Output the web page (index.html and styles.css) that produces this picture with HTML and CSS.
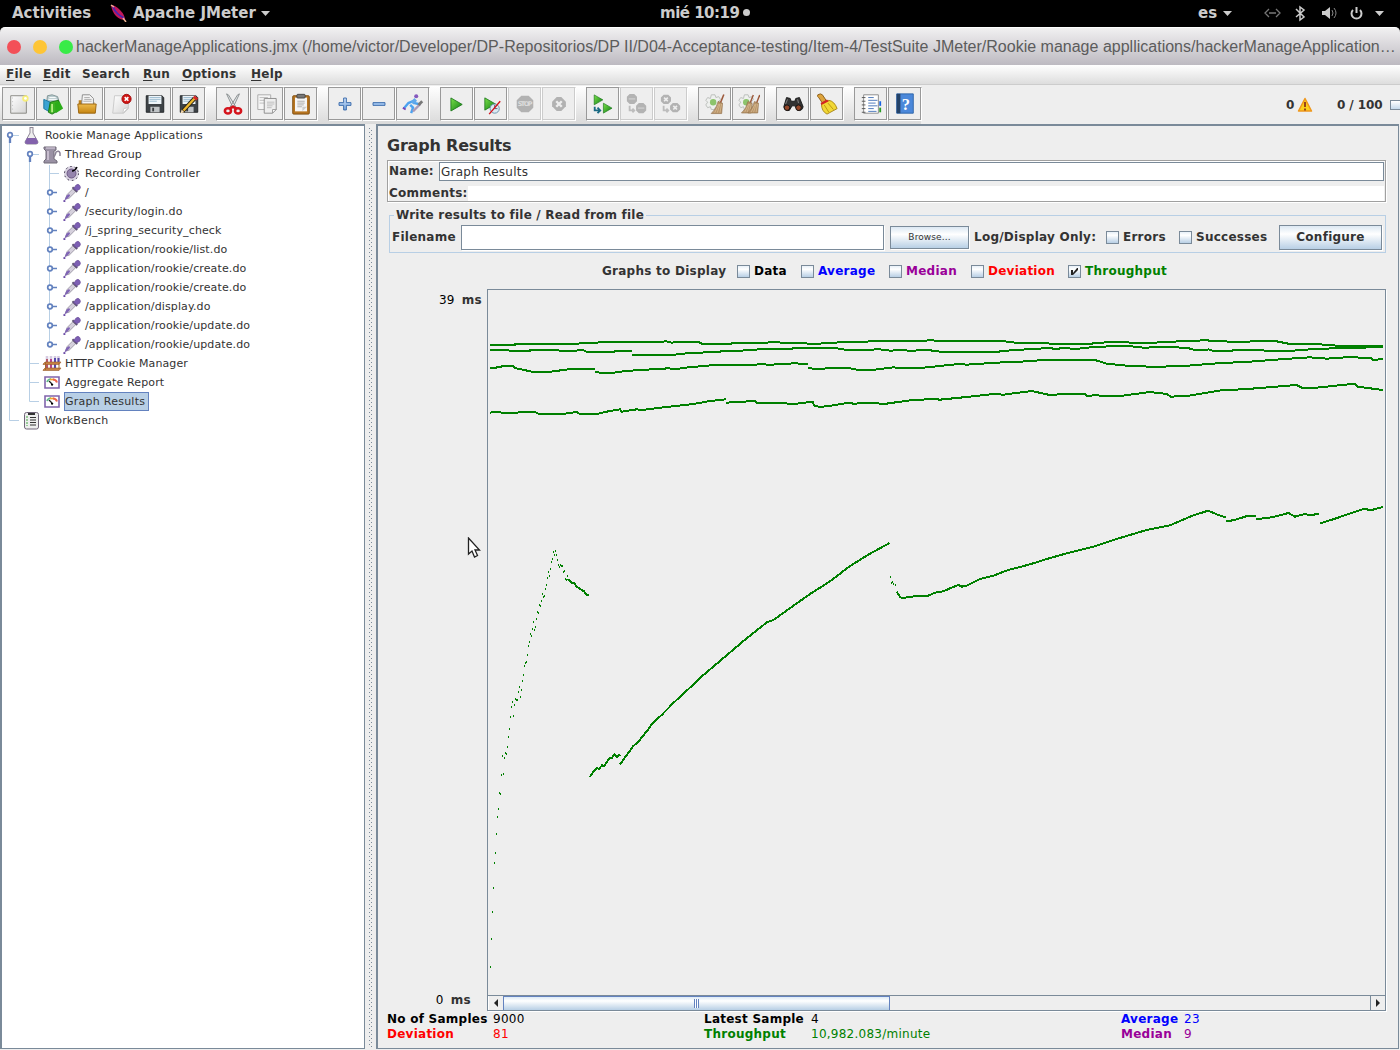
FILE: index.html
```html
<!DOCTYPE html>
<html lang="es">
<head>
<meta charset="utf-8">
<title>Apache JMeter</title>
<link rel="stylesheet" href="styles.css">
</head>
<body>
<svg class="defs" width="0" height="0">
  <defs>
    <linearGradient id="green" x2="1" y2="1"><stop stop-color="#7be04a"/><stop offset="1" stop-color="#0c7d12"/></linearGradient>
    <linearGradient id="paper" x2="1" y2="1"><stop stop-color="#fff"/><stop offset="1" stop-color="#d4d4d4"/></linearGradient>
    <linearGradient id="folderfill" x2="0" y2="1"><stop stop-color="#eebb4c"/><stop offset="1" stop-color="#c58411"/></linearGradient>
    <linearGradient id="bluefill" x2="0" y2="1"><stop stop-color="#cfe2fa"/><stop offset="1" stop-color="#74a3dc"/></linearGradient>
    <symbol id="dropper" viewBox="0 0 20 20"><path d="M3 17l2-5 6-6 3 3-7 7z" fill="#d5d0dc" stroke="#8d8896" stroke-width=".8"/><path d="M2 18.500l2-5 3-2 1 2-3 3z" fill="#8065b5"/><path d="M10.500 4.500l5 5" stroke="#5e5372" stroke-width="2"/><path d="M12 6l2-3.500q2.500-2 4 0t0 4L15 8z" fill="#7d5fb4" stroke="#70539f"/><path d="M1 18h2v2H1z" fill="#6c4ca6"/></symbol>
    <symbol id="gauge" viewBox="0 0 16 13"><path d="M1 1h14v11H1z" fill="#fff" stroke="#8064ac" stroke-width="1.600"/><path d="M3 6q1-3 4-3" fill="none" stroke="#60bc89" stroke-width="1.700"/><path d="M6 3.500h4" stroke="#f0a42d" stroke-width="1.700"/><path d="M9 3.500q3 0 4 3" fill="none" stroke="#ed644a" stroke-width="2"/><path d="M5 5l4 4" stroke="#222" stroke-width="1.200"/><path d="M7 8h2v1.500H7z"/></symbol>
    <symbol id="floppy" viewBox="0 0 22 22"><path d="M1.500 2h17l2 2v16h-19z" fill="#3d4246" stroke="#202326"/><path d="M4 2h14v9H4z" fill="#edf4f9"/><path d="M5 4h12M5 6h12M5 8h8" stroke="#99b9ce"/><path d="M6 14h10v6H6z" fill="#bfc3c6"/><path d="M8 15h2v4H8z" fill="#3b3f42"/></symbol>
    <symbol id="play" viewBox="0 0 16 18"><path d="M1 1.500l13 7.500L1 16.500z" fill="url(#green)" stroke="#1a771b"/></symbol>
    <symbol id="broom" viewBox="0 0 18 24"><path d="M16.500 1l-4 10" stroke="#9d5a3c" stroke-width="1.800"/><path d="M10 9l5 2-1 12H2q6-5 8-14z" fill="#b9956a" stroke="#94714b" stroke-width=".8"/><path d="M11 12L6 22M12 12L9 22m5-10l-2 10" stroke="#dcc096" stroke-width=".8"/></symbol>
    <symbol id="gear" viewBox="0 0 18 18"><path d="M7 1h4l1 3 3-1 2 3-2 2v3l2 2-3 3-3-1-1 2H7l-1-3-3 1-2-3 2-3-2-2 2-3 3 1z" fill="#eef0ee" stroke="#b9bdb9"/><circle cx="9" cy="9" r="3.500" fill="#8cc46c"/></symbol>
  </defs>
</svg>

<header class="topbar">
  <span class="activities">Activities</span>
  <svg class="feather" width="18" height="18" viewBox="0 0 18 18"><path d="M1 1q4 0 9 5t5 10q-5 0-9-4T1 1z" fill="#c2185b"/><path d="M3 3q3 7 11 11" fill="none" stroke="#4a25b0" stroke-width="1.800"/><path d="M1 1l3 2M13 14l3 4" stroke="#f0b495" stroke-width="1.500"/></svg>
  <span class="appname">Apache JMeter</span>
  <svg class="caret" width="9" height="5" viewBox="0 0 9 5"><path d="M0 0h9L4.500 5z" fill="#ccc"/></svg>
  <span class="clock">mié 10:19</span><i class="clockdot"></i>
  <span class="lang">es</span>
  <svg class="caret langcaret" width="9" height="5" viewBox="0 0 9 5"><path d="M0 0h9L4.500 5z" fill="#ccc"/></svg>
  <svg class="tray" width="122" height="18" viewBox="0 0 122 18"><g fill="none" stroke="#ccc"><path d="M5 5L1 9l4 4M12 5l4 4-4 4M5 9h7" stroke="#777" stroke-width="1.300"/><path d="M32 5l8 8-4 3V3l4 3-8 7" stroke-width="1.500"/><path d="M68 6q2 3 0 6M70 4q4 5 0 10" stroke="#888"/><path d="M89 6a5 5 0 1 0 7 0M92.500 3v6" stroke-width="2"/></g><path d="M58 7h3l5-4v12l-5-4h-3zM111 7h9l-4.500 5z" fill="#ccc"/></svg>
</header>

<div class="titlewrap"><div class="titlebar">
  <i class="light red"></i><i class="light yellow"></i><i class="light lime"></i>
  <span class="wintitle">hackerManageApplications.jmx (/home/victor/Developer/DP-Repositorios/DP II/D04-Acceptance-testing/Item-4/TestSuite JMeter/Rookie manage appllications/hackerManageApplication…</span>
</div></div>

<nav class="menubar">
  <span class="m-file"><u>F</u>ile</span><span class="m-edit"><u>E</u>dit</span><span class="m-search">Search</span><span class="m-run"><u>R</u>un</span><span class="m-options"><u>O</u>ptions</span><span class="m-help"><u>H</u>elp</span>
</nav>

<div class="toolbar">
  <div class="tools">
    <div class="group">
      <button><svg width="24" height="24" viewBox="0 0 24 24"><path d="M3 3h17v19H3z" fill="url(#paper)" stroke="#85857f"/><path d="M5 5v15" stroke="#bbb" stroke-dasharray="1 3"/><circle cx="19" cy="6" r="3.500" fill="#f6ee7b"/><circle cx="19" cy="6" r="1.500" fill="#fff"/></svg></button>
      <button><svg width="24" height="24" viewBox="0 0 24 24"><path d="M6 3l5-1 6 2 2 7H5z" fill="#b9cccf" stroke="#7e9293"/><path d="M8 5h7M7 7h9" stroke="#fff"/><path d="M2 7l7 3v11l-7-4z" fill="#3aa3d3" stroke="#17739e"/><path d="M9 10l9-2v11l-7 4-4-2z" fill="#3db223" stroke="#16750f"/><path d="M14 11l5-2 4 8-8 5z" fill="#2bad19"/><path d="M11 12v9" stroke="#b4ee83" stroke-width="2"/></svg></button>
      <button><svg width="24" height="24" viewBox="0 0 24 24"><path d="M3 11V8h4l1 2h12v11H3z" fill="#bd801e"/><path d="M7 2h8l4 4v8H6z" fill="#f4f4f4" stroke="#888"/><path d="M9 5h6M9 7h8M8 9h9" stroke="#aaa"/><path d="M2 12h20l-1 10H3z" fill="url(#folderfill)" stroke="#99620d"/></svg></button>
      <button><svg width="24" height="24" viewBox="0 0 24 24"><path d="M5 3h15v14l-5 5H3z" fill="url(#paper)" stroke="#c8c8c8"/><path d="M20 16l-5 1-1 5z" fill="#fff" stroke="#ccc"/><circle cx="18" cy="6.500" r="5" fill="#cf1715" stroke="#a20b0c"/><path d="M16 4.500l4 4m0-4l-4 4" stroke="#fff" stroke-width="1.800"/></svg></button>
      <button><svg width="24" height="24"><use href="#floppy" x="1" y="1" width="22" height="22"/></svg></button>
      <button><svg width="24" height="24"><use href="#floppy" x="1" y="1" width="22" height="22"/><path d="M5 20L18 6" stroke="#292316" stroke-width="4.500"/><path d="M6 19L18 6" stroke="#edb62d" stroke-width="2.600"/><path d="M17 4l4 3" stroke="#d52928" stroke-width="3"/><path d="M3 22l1-4 3 3z" fill="#f9ddb4"/></svg></button>
    </div>
    <div class="group">
      <button><svg width="24" height="24" viewBox="0 0 24 24"><path d="M5 1l2 1 8 13-3 1zM19 1l-2 1-8 13 3 1z" fill="#e5e8ea" stroke="#858a8c"/><g fill="none" stroke="#d5141c" stroke-width="2.800"><ellipse cx="6.500" cy="19.500" rx="3.300" ry="2.800"/><ellipse cx="17.500" cy="19.500" rx="3.300" ry="2.800"/><path d="M8 17l4-2 4 2"/></g></svg></button>
      <button><svg width="24" height="24" viewBox="0 0 24 24"><path d="M2 2h14v16H2z" fill="#f5f5f5" stroke="#aaa"/><path d="M4 5h9M4 8h8M4 11h6" stroke="#bbb"/><path d="M9 6h13v12l-4 4H9z" fill="#eee" stroke="#8a8a8a"/><path d="M12 10h8M12 12h8M12 14h6M12 16h5" stroke="#bbb"/><path d="M22 18h-4v4z" fill="#fff" stroke="#999"/></svg></button>
      <button><svg width="24" height="24" viewBox="0 0 24 24"><rect x="3" y="3" width="18" height="20" rx="1" fill="#b77521" stroke="#7c4a0c"/><path d="M5.500 5h13v15h-13z" fill="#f5f5f5"/><rect x="7.500" y="1.500" width="9" height="4" rx="1" fill="#777" stroke="#444"/><path d="M8 9h8M8 11h8M8 13h7M8 15h5" stroke="#aaa"/><path d="M18.500 15h-5v5z" fill="#ccc"/></svg></button>
    </div>
    <div class="group">
      <button><svg width="24" height="24" viewBox="0 0 24 24"><path d="M10.500 5.500h3v5h5v3h-5v5h-3v-5h-5v-3h5z" fill="url(#bluefill)" stroke="#3869aa"/></svg></button>
      <button><svg width="24" height="24" viewBox="0 0 24 24"><path d="M5.500 10.500h13v3h-13z" fill="#9ec2ee" stroke="#3869aa"/></svg></button>
      <button><svg width="24" height="24" viewBox="0 0 24 24"><path d="M2 17l5-6 5-2 2 2 4 1M9 13l3 3-2 6" fill="none" stroke="#4ba2f0" stroke-width="2.600"/><path d="M11 11l4-4" stroke="#60a9eb" stroke-width="4"/><circle cx="15.500" cy="3.500" r="2.200" fill="#8559bd"/><path d="M12 20l8-8" stroke="#a99ab7" stroke-width="2.500"/><path d="M18 13l4-4" stroke="#777" stroke-width="3"/><path d="M1 16l3 2" stroke="#7542b7" stroke-width="2"/></svg></button>
    </div>
    <div class="group">
      <button><svg width="24" height="24"><use href="#play" x="4" y="4" width="16" height="17"/></svg></button>
      <button><svg width="24" height="24"><use href="#play" x="4" y="4" width="15" height="16"/><circle cx="16" cy="17" r="5" fill="#dbe9f2" stroke="#668faa"/><path d="M16 13v4h3" fill="none" stroke="#557"/><path d="M10 23L22 9" stroke="#d41019" stroke-width="1.500"/></svg></button>
      <button class="off"><svg width="24" height="24" viewBox="0 0 24 24"><path d="M8 3h8l5 5v8l-5 5H8l-5-5V8z" fill="#b2b2b2"/><text x="4" y="14.500" class="stoptext" textLength="16">STOP</text></svg></button>
      <button class="off"><svg width="24" height="24" viewBox="0 0 24 24"><path d="M9.500 4.500h5l5 5v5l-5 5h-5l-5-5v-5z" fill="#b2b2b2"/><path d="M9 9l6 6m0-6l-6 6" stroke="#eee" stroke-width="2.600"/></svg></button>
    </div>
    <div class="group">
      <button><svg width="24" height="24"><use href="#play" x="1" y="1" width="13" height="13"/><use href="#play" x="11" y="10" width="13" height="13"/><path d="M3 15v4h5M6 16l3 3-3 3" fill="none" stroke="#196a83" stroke-width="2"/></svg></button>
      <button class="off"><svg width="24" height="24" viewBox="0 0 24 24"><path d="M4 1h5l3 3v5l-3 3H4L1 9V4zM14 11h5l3 3v5l-3 3h-5l-3-3v-5z" fill="#b3b3b3"/><path d="M3 6.500h7M13 16.500h7" stroke="#c8c8c8" stroke-width="2"/><path d="M4 14v5h4M7 17l2 2-2 2" fill="none" stroke="#bdbdbd" stroke-width="2"/></svg></button>
      <button class="off"><svg width="24" height="24" viewBox="0 0 24 24"><path d="M4 2h5l3 3v4l-3 3H4L1 9V5zM14 11h5l3 3v4l-3 3h-5l-3-3v-4z" fill="#b3b3b3"/><path d="M4.500 5l4 4m0-4l-4 4M14.500 14l4 4m0-4l-4 4" stroke="#eee" stroke-width="1.800"/><path d="M4 14v5h4M7 17l2 2-2 2" fill="none" stroke="#bdbdbd" stroke-width="2"/></svg></button>
    </div>
    <div class="group">
      <button><svg width="24" height="24"><use href="#gear" x="1" y="1" width="18" height="18"/><use href="#broom" x="6" y="0" width="17" height="24"/></svg></button>
      <button><svg width="24" height="24"><use href="#gear" x="0" y="1" width="18" height="18"/><use href="#broom" x="2" y="0" width="16" height="24"/><use href="#broom" x="9" y="0" width="16" height="24"/></svg></button>
    </div>
    <div class="group">
      <button><svg width="24" height="24" viewBox="0 0 24 24"><path d="M5 5l4 1 1 3h4l1-3 4-1 4 10q-1 5-6 4l-3-5h-3l-3 5q-5 1-6-4z" fill="#333" stroke="#171717"/><circle cx="5.500" cy="16" r="3" fill="#934729" stroke="#111"/><circle cx="18" cy="16" r="3" fill="#934729" stroke="#111"/><path d="M6 7l-2 5M17 7l1 4" stroke="#888"/></svg></button>
      <button><svg width="24" height="24" viewBox="0 0 24 24"><path d="M2 2q3-2 5 0l4 6-4 3-4-6q-2-1-1-3z" fill="#dda33c" stroke="#885a16"/><path d="M6 12l8-4q6 1 9 9l-11 6q-6-3-6-11z" fill="#f1d835" stroke="#a88412"/><path d="M5 11l7-4 2 2-8 4z" fill="#d32721"/><path d="M9 13l5 8M13 11l6 7" stroke="#b9930e"/></svg></button>
    </div>
    <div class="group">
      <button><svg width="24" height="24" viewBox="0 0 24 24"><path d="M4 2h16v20H4z" fill="#fff" stroke="#888"/><path d="M2 5h4M2 9h4M2 13h4M2 17h4M2 21h4" stroke="#555"/><path d="M9 5h6M9 8h10M9 11h8M9 14h10M9 17h6M9 20h9" stroke="#4572b8"/><path d="M22 9v5" stroke="#1a63e3" stroke-width="2"/><path d="M22 16v5" stroke="#299c24" stroke-width="2"/></svg></button>
      <button><svg width="24" height="24" viewBox="0 0 24 24"><path d="M3 1h18v21H3z" fill="#4b88da" stroke="#2b62a8"/><path d="M3 1h4v21H3z" fill="#234268"/><text x="8.500" y="18" class="helptext">?</text></svg></button>
    </div>
  </div>
  <span class="count">0</span>
  <svg class="warn" width="16" height="16" viewBox="0 0 16 16"><path d="M8 1.500l6.500 12.500h-13z" fill="#fbd01b" stroke="#ef971d" stroke-width="1.500" stroke-linejoin="round"/><path d="M8 5v5M8 11.500v2" stroke="#99441a" stroke-width="2"/></svg>
  <span class="ratio">0 / 100</span><i class="indicator"></i>
</div>

<main class="workspace">
  <aside class="tree">
    <svg class="branches" width="80" height="310" viewBox="0 0 80 310"><g fill="none" stroke="#b8cfe5"><path d="M7.500 15v279.500H17M10 9.500h7M27.500 34v241.500H37M30 28.500h7M27.500 237.500H37M27.500 256.500H37M47.500 39v179M47.500 47.500H57"/></g>
      <g fill="#fff" stroke="#6382bf" stroke-width="1.700"><path d="M8 11v6M28 30v6" stroke-width="2.300"/><circle cx="8" cy="9" r="2.300"/><circle cx="28" cy="28" r="2.300"/><path d="M50 66.500h5M50 85.500h5M50 104.500h5M50 123.500h5M50 142.500h5M50 161.500h5M50 180.500h5M50 199.500h5M50 218.500h5"/><circle cx="48" cy="66.500" r="2.300"/><circle cx="48" cy="85.500" r="2.300"/><circle cx="48" cy="104.500" r="2.300"/><circle cx="48" cy="123.500" r="2.300"/><circle cx="48" cy="142.500" r="2.300"/><circle cx="48" cy="161.500" r="2.300"/><circle cx="48" cy="180.500" r="2.300"/><circle cx="48" cy="199.500" r="2.300"/><circle cx="48" cy="218.500" r="2.300"/></g></svg>
    <ul class="nodes">
      <li class="l0"><svg width="20" height="19" viewBox="0 0 20 19"><path d="M7.500 1.500h4M8 2v5l-5 9q0 2 2 2h9q2 0 2-2l-5-9V2" fill="#eee" stroke="#8c8594"/><path d="M5 12h9l2 4q0 2-2 2H5q-2 0-2-2z" fill="#8362ac"/></svg><span>Rookie Manage Applications</span></li>
      <li class="l1"><svg width="20" height="19" viewBox="0 0 20 19"><path d="M2 2h12v3l-2 1v8l3 2v2H2v-2l2-2V6L2 4z" fill="#9a91a4" stroke="#716b78"/><path d="M4 3h9" stroke="#ded5e5"/><path d="M6 6v9" stroke="#c7bdce" stroke-width="2"/><path d="M12 12q2-4 2-5 3-2 4 1v3" fill="none" stroke="#8c8396" stroke-width="1.500"/></svg><span>Thread Group</span></li>
      <li class="l2"><svg width="20" height="19" viewBox="0 0 20 19"><circle cx="9.500" cy="9.500" r="7.500" fill="#d9d3e1"/><circle cx="9.500" cy="9.500" r="7" fill="none" stroke="#332b42" stroke-dasharray="1.500 3"/><circle cx="9.500" cy="9.500" r="4.500" fill="#9584ad" stroke="#6d5985"/><path d="M10 7q3 0 5-4" fill="none" stroke="#000" stroke-width="1.500"/></svg><span>Recording Controller</span></li>
      <li class="l2"><svg width="20" height="19"><use href="#dropper"/></svg><span>/</span></li>
      <li class="l2"><svg width="20" height="19"><use href="#dropper"/></svg><span>/security/login.do</span></li>
      <li class="l2"><svg width="20" height="19"><use href="#dropper"/></svg><span>/j_spring_security_check</span></li>
      <li class="l2"><svg width="20" height="19"><use href="#dropper"/></svg><span>/application/rookie/list.do</span></li>
      <li class="l2"><svg width="20" height="19"><use href="#dropper"/></svg><span>/application/rookie/create.do</span></li>
      <li class="l2"><svg width="20" height="19"><use href="#dropper"/></svg><span>/application/rookie/create.do</span></li>
      <li class="l2"><svg width="20" height="19"><use href="#dropper"/></svg><span>/application/display.do</span></li>
      <li class="l2"><svg width="20" height="19"><use href="#dropper"/></svg><span>/application/rookie/update.do</span></li>
      <li class="l2"><svg width="20" height="19"><use href="#dropper"/></svg><span>/application/rookie/update.do</span></li>
      <li class="l1"><svg width="20" height="19" viewBox="0 0 20 19"><path d="M5 2v12M9 2v12M13 2v12M16.500 2v6" stroke="#d5cbe1" stroke-width="2.600"/><path d="M5 5v9" stroke="#b45668" stroke-width="2"/><path d="M9 5v9" stroke="#b5428d" stroke-width="2"/><path d="M13 4v10M16.500 4v4" stroke="#5648ac" stroke-width="2"/><path d="M1 10l2-2h16l-2 2.500H1zM1 16l2-2h16l-2 2.500H1z" fill="#c78144" stroke="#995c2a" stroke-width=".6"/><path d="M3.500 8v8M17 9v6" stroke="#a5642c"/></svg><span>HTTP Cookie Manager</span></li>
      <li class="l1"><svg width="20" height="19"><use href="#gauge" x="2" y="3" width="16" height="13"/></svg><span>Aggregate Report</span></li>
      <li class="l1"><svg width="20" height="19"><use href="#gauge" x="2" y="3" width="16" height="13"/></svg><span class="selected">Graph Results</span></li>
      <li class="l0"><svg width="20" height="19" viewBox="0 0 20 19"><rect x="2.500" y="1.500" width="14" height="16.500" rx="2" fill="#eee" stroke="#71667a"/><path d="M6 3h7" stroke="#333" stroke-width="2"/><path d="M5 5v10" stroke="#43aa43" stroke-dasharray="2 1"/><path d="M8 6.500h6M8 9h6M8 11.500h6M8 14h6" stroke="#333"/></svg><span>WorkBench</span></li>
    </ul>
  </aside>
  <div class="divider"></div>
  <section class="panel">
    <h1>Graph Results</h1>
    <div class="namebox">
      <div class="namerow"><label>Name:</label><div class="field">Graph Results</div></div>
      <div class="commentrow"><label>Comments:</label><div class="comment"></div></div>
    </div>
    <fieldset>
      <legend>Write results to file / Read from file</legend>
      <div class="filerow"><label class="fn">Filename</label><div class="filefield"></div><button class="browse">Browse...</button><span class="logonly">Log/Display Only:</span><i class="check"></i><span class="errors">Errors</span><i class="check"></i><span class="successes">Successes</span><button class="configure">Configure</button></div>
    </fieldset>
    <div class="choices"><span class="c-lead">Graphs to Display</span><i class="check"></i><span class="c-data">Data</span><i class="check"></i><span class="c-avg blue">Average</span><i class="check"></i><span class="c-med purple">Median</span><i class="check"></i><span class="c-dev redtext">Deviation</span><i class="check"><svg width="11" height="11" viewBox="0 0 11 11"><path d="M2 4h2v3l4-5h1v2L4 9H2z" fill="#222"/></svg></i><span class="c-thr green">Throughput</span></div>
    <div class="graph">
      <div class="axis"><span class="ymax">39&nbsp; <b>ms</b></span><span class="ymin">0&nbsp; <b>ms</b></span></div>
      <div class="plotbox">
        <svg class="plot" width="896" height="705" viewBox="488 290 896 705" shape-rendering="crispEdges">
          <g transform="translate(480 330) scale(.33333333)" fill="none" stroke="#008000" stroke-width="6">
            <path d="M30 45H105V42H270L365 37 548 36 555 33 575 38 590 36H655L668 42H750L760 39 850 38 880 37 960 39 1000 42 1080 37 1180 34 1330 33 1350 30 1375 33 1575 34 1615 39 1735 41H1835L1845 39 1900 36 1960 38 2010 39 2070 35 2150 33 2170 30 2190 32 2250 35 2280 37 2315 34H2390L2425 41 2520 43 2570 47 2680 48 2709 48"/>
            <path d="M30 60H85L90 63H150V60H235L240 63 285 62 310 60 320 66H400L405 64 455 63M457 75H575L620 70 680 67 730 64 800 61 850 57H930L945 54H1065L1100 60H1175L1190 57 1230 62 1275 60 1290 64 1320 60 1365 62 1380 65 1470 66H1545L1600 60 1645 58 1690 55 1715 53 1720 57 1745 55 1795 56 1840 51 1890 49 1945 48 2000 54 2015 51H2090L2105 54 2120 53 2140 59 2175 61 2185 58 2200 63 2255 62 2265 60 2320 61 2440 63 2450 60 2540 56 2580 53H2655L2680 50H2709"/>
            <path d="M30 115H48L50 111 80 108 100 109 105 114 160 126H205L265 118 345 117M345 125L365 129H395L430 124 465 121 565 115 590 117 625 112 705 105H815L850 102 865 105 900 102 945 100 983 102M985 115L1030 117 1040 114 1110 115 1135 120 1185 119 1215 115 1240 112 1260 114 1330 113 1370 109 1435 102 1460 104 1550 98 1640 94 1690 90H1845L1880 101 1940 107 1990 109 2020 111 2125 107 2210 100 2310 95 2400 88 2490 82 2540 86 2610 81 2675 85 2680 90 2709 87"/>
            <path d="M30 248L50 245 70 249 110 248 130 245 165 246 175 251H255L290 246 300 252H350L385 244 420 238 425 245 470 238 485 240 560 231 640 222 690 213 738 208M738 218L825 213 830 219 950 221 998 215 1002 226 1020 231 1060 226 1105 218 1120 221 1190 218 1205 223 1290 211 1360 207 1380 209 1450 202 1540 192 1570 194 1655 183 1705 194 1815 192 1820 198 1850 195 1865 198H1920L2010 186 2060 192 2072 200 2120 198 2230 180 2290 178 2450 165 2465 173 2500 174 2625 161 2632 170 2709 180"/>
            <path d="M264 747L273 757 283 760 290 770 300 777 312 784 322 796H328M330 1341L338 1328 350 1314 357 1317 366 1306 373 1308 388 1285 395 1284 403 1274 410 1281 420 1274M420 1303L460 1248 475 1235 500 1204 520 1177 545 1155 580 1119 645 1059 655 1048 741 975 801 924 862 876 880 870 990 792 1050 754 1110 708 1170 671 1229 639M1250 785L1260 800 1266 805 1285 801 1320 797H1345L1365 788 1390 784 1410 775 1435 765 1445 770 1460 767 1500 747 1540 737 1585 720 1650 703 1700 687 1760 670 1840 650 1900 630 1950 615 2000 600 2070 586 2140 556 2185 542 2215 555 2237 562M2239 573L2260 571 2305 557 2327 557M2329 568L2380 561 2425 549 2445 560 2475 552 2490 556 2517 551M2519 581L2565 566 2650 537 2675 540 2709 531"/>
          </g>
          <g transform="translate(480 530) scale(.33333333)" stroke="#008000" stroke-width="3" fill="none"><path d="M31 1308v6M34 1224v6M37 1143v6M40 1071v6M43 996v6M46 966v6M49 909v6M52 858v6M55 834v6M58 786v6M61 789v6M64 732v6M67 675v6M70 729v6M73 681v6M76 666v6M79 669v6M82 648v6M85 618v6M88 594v6M91 558v6M94 528v6M97 513v6M100 555v6M103 522v6M106 504v6M109 507v6M112 507v6M115 483v6M118 468v6M121 498v6M124 477v6M127 450v6M130 432v6M133 405v6M136 396v6M139 393v6M142 372v6M145 345v6M148 333v6M151 309v6M154 315v6M157 294v6M160 273v6M163 297v6M166 288v6M169 264v6M172 243v6M175 246v6M178 222v6M181 225v6M184 210v6M187 189v6M190 198v6M193 195v6M196 174v6M199 162v6M202 141v6M205 123v6M208 135v6M211 114v6M214 93v6M217 84v6M220 63v6M223 72v6M226 60v6M229 72v6M232 87v6M235 102v6M238 108v6M241 102v6M244 105v6M247 105v6M250 123v6M253 120v6M256 144v6M259 147v6M262 135v6M1231 138v6M1234 156v6M1237 153v6M1240 159v6M1246 162v6"/></g>
        </svg>
        <div class="scrollbar"><button><svg width="6" height="8" viewBox="0 0 6 8"><path d="M5 0v8L1 4z" fill="#222"/></svg></button><div class="thumb"><i></i></div><button class="right"><svg width="6" height="8" viewBox="0 0 6 8"><path d="M1 0v8l4-4z" fill="#222"/></svg></button></div>
      </div>
    </div>
    <div class="stats"><b>No of Samples</b><span>9000</span><b>Latest Sample</b><span>4</span><b class="blue">Average</b><span class="blue">23</span><b class="redtext">Deviation</b><span class="redtext">81</span><b class="green">Throughput</b><span class="green">10,982.083/minute</span><b class="purple">Median</b><span class="purple">9</span></div>
  </section>
</main>
<svg class="pointer" width="14" height="22" viewBox="0 0 14 22"><path d="M1.500 1v16l3.500-3 2.500 6 3-1.500-2.500-5.500h4.500z" fill="#fff" stroke="#222" stroke-width="1.300"/></svg>
</body>
</html>
```
FILE: styles.css
```css
* { box-sizing: border-box; }
body { margin: 0; width: 1400px; height: 1050px; overflow: hidden; background: #eee; color: #333; font: 12px/15px "DejaVu Sans", sans-serif; letter-spacing: .25px; display: flex; flex-direction: column; }
button { padding: 0; margin: 0; font: inherit; color: inherit; letter-spacing: inherit; }
svg { display: block; flex: none; }
.defs { position: absolute; }
b, label { font-weight: bold; }
.topbar { height: 27px; background: #000; color: #ccc; display: flex; align-items: center; font: bold 15px/20px "DejaVu Sans", sans-serif; letter-spacing: 0; white-space: nowrap; padding: 0 0 2px 12px; flex: none; }
.activities { width: 98px; }
.feather { width: 18px; margin-right: 5px; }
.appname { width: 128px; }
.caret { margin-top: 2px; }
.clock { width: 81px; margin-left: 390px; letter-spacing: -.5px; }
.clockdot { width: 7px; height: 7px; background: #ccc; border-radius: 50%; margin-left: 2px; }
.lang { width: 19px; margin-left: 448px; }
.langcaret { margin-left: 6px; margin-right: 32px; }
.titlewrap { background: #000; flex: none; }
.titlebar { height: 38px; border-radius: 5px 5px 0 0; background: linear-gradient(#f1f0f1, #bdbac1); display: flex; align-items: center; padding-left: 7px; border-top: 1px solid #fff; }
.light { width: 14px; height: 14px; border-radius: 50%; margin-right: 12px; flex: none; }
.red { background: #f35058; }
.yellow { background: #fec536; }
.lime { background: #38eb48; margin-right: 3px; }
.wintitle { font: 16px/20px "Liberation Sans", sans-serif; letter-spacing: .007px; color: #5c5c5c; white-space: nowrap; }
.menubar { height: 20px; background: linear-gradient(#fff, #ddd); border-bottom: 1px solid #ccc; display: flex; padding: 2px 0 0 6px; font-weight: bold; flex: none; }
.menubar u { text-underline-offset: 2px; }
.m-file { width: 37px; }
.m-edit { width: 39px; }
.m-search { width: 61px; }
.m-run { width: 39px; }
.m-options { width: 69px; }
.toolbar { height: 39px; display: flex; align-items: center; border-top: 1px solid #eee; flex: none; }
.tools { width: 921px; height: 38px; background: linear-gradient(#fff, #dadada); display: flex; gap: 10px; padding: 1px 0 0 2px; }
.group { display: flex; }
.group button { width: 34px; height: 34px; background: #eee; border: 1px solid #999; box-shadow: inset -1px -1px #999, inset -2px 0 #eee; border-right-color: #fff; border-bottom-color: #fff; display: flex; align-items: center; justify-content: center; }
.group svg { transform: scale(.92); }
.group .off { border-color: #ccc #fff #fff #ccc; box-shadow: inset -1px -1px #ccc; }
.stoptext { font: bold 7px "DejaVu Sans", sans-serif; fill: #ddd; letter-spacing: 0; }
.helptext { font: bold 18px "Liberation Serif", serif; fill: #fff; }
.count { font-weight: bold; margin-left: 365px; width: 11px; }
.warn { margin-right: 24px; }
.ratio { font-weight: bold; width: 53px; white-space: nowrap; letter-spacing: -.1px; }
.indicator { width: 10px; height: 10px; border: 1px solid #7a8a99; border-right: 0; background: linear-gradient(#fff, #c5d9eb); flex: none; }
.workspace { flex: 1; display: grid; grid-template-columns: 365px 11px 1023px; padding-bottom: 1px; min-height: 0; }
.tree { background: #fff; border: solid #7a8a99; border-width: 2px 1px 1px 2px; display: grid; grid-template-columns: 363px; align-content: start; }
.branches, .nodes { grid-area: 1 / 1; }
.nodes { list-style: none; padding: 0; margin: 0; font-size: 11px; letter-spacing: .12px; }
.nodes li { height: 19px; display: flex; align-items: center; }
.l0 { padding-left: 20px; }
.l1 { padding-left: 40px; }
.l2 { padding-left: 60px; }
.nodes span { height: 19px; padding: 2px 1px 0; margin-left: 2px; white-space: nowrap; }
.nodes .selected { background: #b8cfe5; border: 1px solid #6382bf; padding: 1px 2px 0 0; letter-spacing: .25px; width: 85px; }
.divider { background: linear-gradient(#7a8a99, #7a8a99) 0 0 / 0 0 no-repeat, conic-gradient(#7a8a99 0 25%, transparent 0) 0 0 / 0 0, #eee; display: flex; padding: 4px 0 2px 4px; gap: 1px; }
.divider::before, .divider::after { content: ""; width: 1px; background: repeating-linear-gradient(#7a8a99 0 1px, transparent 1px 4px); }
.divider::after { margin: 2px 0 0; }
.panel { border: solid #7a8a99; border-width: 2px 1px 1px 2px; padding: 8px 12px 0 9px; min-width: 0; }
h1 { margin: 0 0 6px; font: bold 16px/23px "DejaVu Sans", sans-serif; height: 21px; letter-spacing: -.2px; }
.namebox { width: 999px; height: 42px; border: 1px solid #a0a0a0; box-shadow: 1px 1px #fff, inset 1px 1px #fff; padding: 1px; margin-top: -1px; }
.namerow { display: flex; height: 19px; }
.namerow label { width: 50px; padding-top: 2px; }
.field { flex: 1; border: 1px solid #7a8a99; background: #fff; line-height: 18px; padding-left: 1px; }
.commentrow { display: flex; margin-top: 5px; height: 15px; }
.commentrow label { width: 79px; }
.comment { flex: 1; background: #fff; }
fieldset { border: 1px solid #b8cfe5; margin: 6px 0 0 2px; padding: 0; width: 997px; height: 45px; min-width: 0; }
legend { font-weight: bold; margin-left: 4px; padding: 0 2px; height: 15px; letter-spacing: .2px; }
.filerow, .choices { display: flex; align-items: center; font-weight: bold; white-space: nowrap; }
.filerow { padding-left: 2px; height: 27px; margin-top: 1px; }
.fn { width: 69px; }
.filefield { width: 423px; height: 25px; border: 1px solid #7a8a99; box-shadow: 1px 1px #fff; background: #fff; margin-right: 6px; }
.browse, .configure { border: 1px solid #7a8a99; background: linear-gradient(#dce8f3, #fff 35%, #b8cfe5); box-shadow: 1px 1px #fff; border-radius: 0; }
.browse { width: 79px; height: 23px; font-size: 9px; font-weight: normal; letter-spacing: .1px; margin-right: 5px; }
.configure { width: 103px; height: 25px; font-weight: bold; }
.logonly { width: 132px; }
.check { width: 13px; height: 13px; border: 1px solid #7a8a99; background: linear-gradient(#e8f0f8, #fff 30%, #b8cfe5); margin-right: 4px; flex: none; }
.errors { width: 56px; }
.successes { width: 83px; }
.choices { margin-left: 215px; height: 16px; margin-top: 10px; color: #000; }
.c-lead { width: 135px; color: #333; }
.c-data { width: 47px; }
.c-avg { width: 71px; }
.c-med { width: 65px; }
.c-dev { width: 80px; }
.blue { color: #00f; }
.purple { color: #990099; }
.redtext { color: #f00; }
.green { color: #008000; }
.graph { display: grid; grid-template-columns: 100px 899px; height: 721px; margin-top: 10px; }
.axis { display: flex; flex-direction: column; justify-content: space-between; align-items: flex-end; color: #000; padding: 4px 5px 3px 0; white-space: nowrap; }
.axis b { color: #333; margin-left: -1px; }
.ymin { margin-right: 11px; }
.plotbox { border: 1px solid #7a8a99; box-shadow: 1px 1px #fff; }
.plot { margin-right: 1px; }
.scrollbar { height: 15px; border-top: 1px solid #7a8a99; display: flex; background: #eee; }
.scrollbar button { width: 15px; border: 0; border-left: 1px solid #fff; background: #eee; display: flex; align-items: center; justify-content: center; }
.scrollbar .right { border-left: 1px solid #7a8a99; margin-left: auto; }
.thumb { width: 387px; border: 1px solid #6382bf; border-bottom: 0; background: linear-gradient(#dce9f5, #fff 30%, #b8cfe5); display: flex; align-items: center; justify-content: center; }
.thumb i { width: 5px; height: 9px; background: repeating-linear-gradient(90deg, #6382bf 0 1px, #fff 1px 2px); }
.stats { display: grid; grid-template-columns: 106px 211px 107px 310px 63px 50px; grid-auto-rows: 15px; margin-top: 2px; color: #000; }
.stats .blue { color: #00f; }
.stats .purple { color: #990099; }
.stats .redtext { color: #f00; }
.stats .green { color: #008000; }
.pointer { position: absolute; left: 467px; top: 537px; }
```
